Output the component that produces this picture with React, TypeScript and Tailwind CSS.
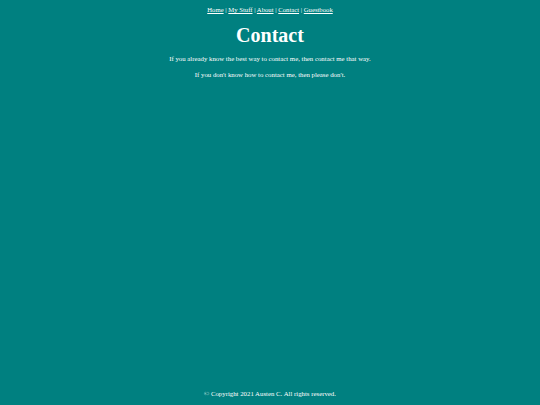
export default function App() {
  const links = ["Home", "My Stuff", "About", "Contact", "Guestbook"];
  return (
    <div className="flex min-h-screen flex-col items-center bg-[#008080] font-['Liberation_Serif',serif] text-white">
      <nav className="mt-[6px] text-[6.7px] leading-[8px]">
        {links.map((l, i) => (
          <span key={l}>
            {i > 0 ? " | " : null}
            <a href="#" className="underline">
              {l}
            </a>
          </span>
        ))}
      </nav>
      <h1 className="mt-[9px] text-[20px] font-bold leading-[24px]">Contact</h1>
      <p className="mt-[8px] text-[6.8px] leading-[8px]">
        If you already know the best way to contact me, then contact me that way.
      </p>
      <p className="mt-[8px] text-[6.8px] leading-[8px]">
        If you don't know how to contact me, then please don't.
      </p>
      <footer className="mt-auto mb-[7px] text-[6.8px] leading-[8px]">
        © Copyright 2021 Austen C. All rights reserved.
      </footer>
    </div>
  );
}
